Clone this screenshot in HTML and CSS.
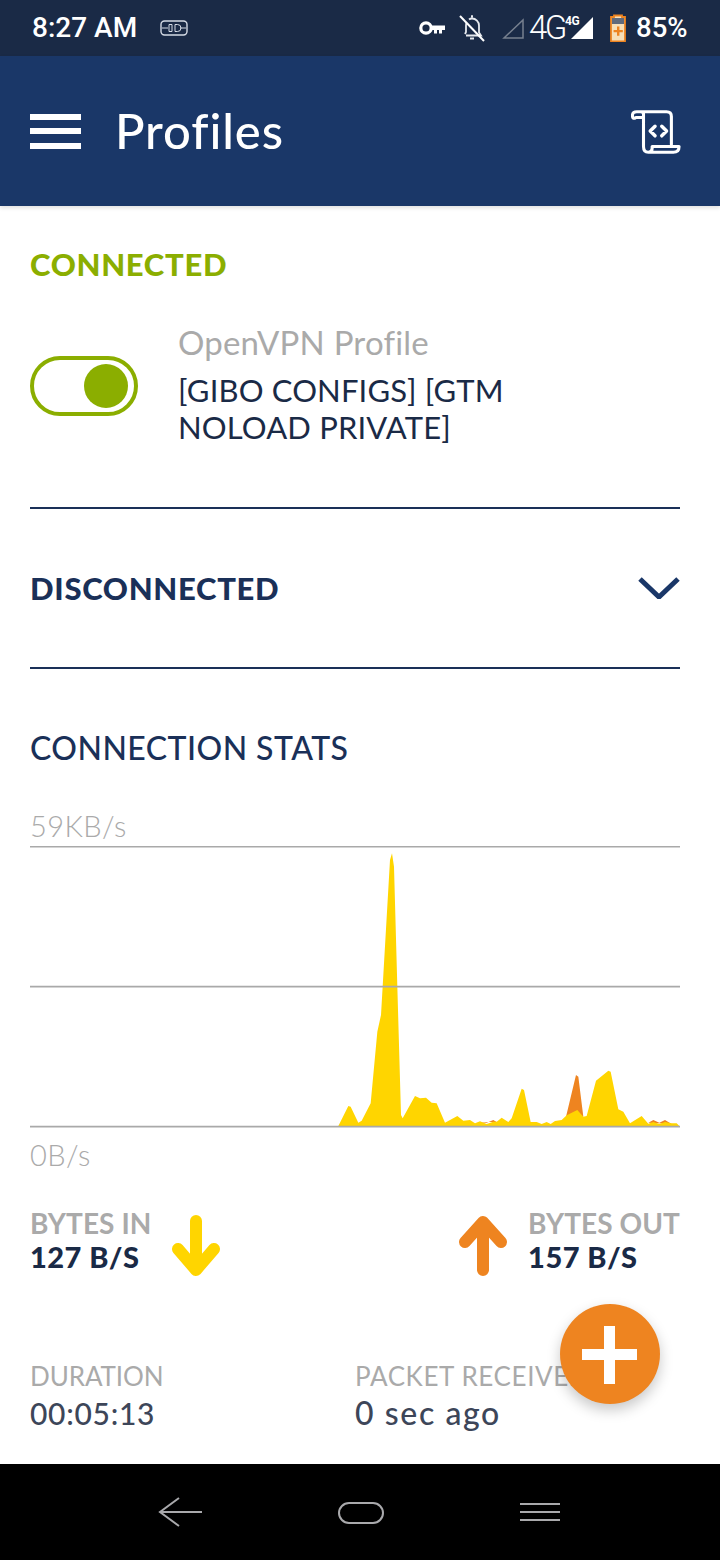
FILE: index.html
```html
<!DOCTYPE html>
<html lang="en">
<head>
<meta charset="utf-8">
<title>Profiles</title>
<link rel="stylesheet" href="styles.css">
</head>
<body>
<div class="phone">
  <div class="statusbar">
    <div class="status-left">
      <span class="time">8:27 AM</span>
      <svg class="ic-vpn" viewBox="0 0 28 16" fill="none" stroke="#d5dbe5" stroke-width="1.4"><rect x="1" y="1" width="26" height="14" rx="3.5"/><path d="M2 8h6M20 8h6M9 4.5h3v7H9zM15 4.5h2.5a3.5 3.5 0 0 1 0 7H15z" stroke-width="1"/></svg>
    </div>
    <div class="status-right">
      <svg class="ic-key" viewBox="0 0 26 14" fill="none" stroke="#fff"><circle cx="7" cy="7" r="5.200" stroke-width="3.200"/><path d="M12 4.500h14v4.500h-3v3.500h-3V9h-2v3.500h-3V9h-3z" fill="#fff" stroke="none"/></svg>
      <svg class="ic-bell" viewBox="0 0 26 27" fill="none" stroke="#e6e9ee" stroke-width="1.800"><path d="M13 3.500a7 7 0 0 1 7 7v7l2 3H7M6 19l1-2v-6.500q0-1.500.6-3M10 4.500q1.200-1 3-1M11 23.500h4"/><path d="M12 1.500h2" stroke-width="2.500"/><path d="M1 1l24 25" stroke-width="2" stroke="#fff"/></svg>
      <svg class="ic-signal" viewBox="0 0 22 21" fill="none" stroke="#77808f" stroke-width="1.500"><path d="M21 2v18H2z"/></svg>
      <span class="net">4G</span>
      <span class="net-wrap">
        <svg class="ic-bars" viewBox="0 0 22 22"><path d="M22 0v22H0z" fill="#fff"/></svg>
        <span class="net-small">4G</span>
      </span>
      <svg class="ic-batt" viewBox="0 0 16 28"><path d="M4 1.500h8V3h3v24.500H1V3h3z" fill="#f6dfb8" stroke="#ee8420" stroke-width="1.800"/><path d="M2 4h12v6H2z" fill="#5f6a7c"/><path d="M7 12.500h2.400v3.400h3.400v2.400H9.400v3.400H7v-3.400H3.600v-2.400H7z" fill="#ee8420"/></svg>
      <span class="batt-text">85%</span>
    </div>
  </div>

  <header class="appbar">
    <div class="burger"><i></i><i></i><i></i></div>
    <h1 class="title">Profiles</h1>
    <svg class="ic-script" viewBox="0 0 52 46" fill="none" stroke="#fff" stroke-width="3.200" stroke-linejoin="round" stroke-linecap="round"><path d="M5 8h8M13 14V4Q13 2 10 2H6Q1.500 2 1.500 6T5 8M10 2h27q5 0 5 5v29"/><path d="M13 14v24q0 6 5 6h26q6 0 6-6H22v2q0 4-4 4"/><path d="M25 17l-5 5 5 5M32 17l5 5-5 5" stroke-width="3.600"/></svg>
  </header>

  <main class="content">
    <section class="block-connected">
      <h2 class="h-connected">CONNECTED</h2>
      <div class="profile">
        <div class="toggle"><span class="knob"></span></div>
        <div class="profile-text">
          <div class="profile-label">OpenVPN Profile</div>
          <div class="profile-name">[GIBO CONFIGS] [GTM NOLOAD PRIVATE]</div>
        </div>
      </div>
    </section>

    <section class="block-disconnected">
      <h2 class="h-disconnected">DISCONNECTED</h2>
      <svg class="chevron" viewBox="0 0 42 22" fill="none" stroke="#1a3768" stroke-width="5"><path d="M2 2l19 18L40 2"/></svg>
    </section>

    <section class="stats">
      <h2 class="h-stats">CONNECTION STATS</h2>
      <div class="axis axis-top">59KB/s</div>
      <svg class="chart" viewBox="-870 18 1950 846">
        <path class="area-out" d="M738 830L768 705L775 710L790 830ZM475 846L500 848L520 840L530 846ZM985 848L1000 840L1018 848L1035 840L1055 852Z"/>
        <path class="area-in" d="M55 858L85 798L92 800L115 848L125 842L152 790L172 575L183 525L210 60L216 40L222 80L232 440L243 825L248 835L285 768L300 775L318 773L335 788L350 790L375 848L412 828L430 842L450 840L465 850L480 844L500 852L520 845L530 845L545 833L565 846L575 835L605 746L612 750L632 846L650 846L665 852L680 846L692 852L705 843L725 840L740 826L772 810L790 830L800 828L828 722L865 692L872 695L895 808L910 815L930 850L965 828L985 851L1000 846L1018 852L1035 846L1055 850L1070 850L1080 860L55 860Z"/>
        <path class="gridline" d="M-870 20H1080M-870 440H1080M-870 860H1080"/>
      </svg>
      <div class="axis axis-bottom">0B/s</div>

      <div class="rates">
        <div class="rate">
          <div>
            <div class="rate-label">BYTES IN</div>
            <div class="rate-value">127 B/S</div>
          </div>
          <svg class="arrow" viewBox="0 0 48 61" fill="none" stroke="#ffd500" stroke-width="12" stroke-linecap="round" stroke-linejoin="round"><path d="M24 6v49M6 34l18 21 18-21"/></svg>
        </div>
        <div class="rate">
          <svg class="arrow" viewBox="0 0 48 61" fill="none" stroke="#ee8420" stroke-width="12" stroke-linecap="round" stroke-linejoin="round"><path d="M24 55V7M6 27L24 7l18 20"/></svg>
          <div>
            <div class="rate-label">BYTES OUT</div>
            <div class="rate-value">157 B/S</div>
          </div>
        </div>
      </div>

      <div class="meta">
        <div>
          <div class="meta-label">DURATION</div>
          <div class="meta-value">00:05:13</div>
        </div>
        <div>
          <div class="meta-label meta-label-wide">PACKET RECEIVED</div>
          <div class="meta-value meta-value-wide">0 sec ago</div>
        </div>
      </div>
    </section>
    <button class="fab" aria-label="Add"><i class="plus-h"></i><i class="plus-v"></i></button>
  </main>

  <nav class="navbar">
    <svg class="nav-back" viewBox="0 0 44 32" fill="none" stroke="#a9a9ac" stroke-width="2"><path d="M21 1L2 15l19 14M2 15h42"/></svg>
    <svg class="nav-home" viewBox="0 0 46 22" fill="none" stroke="#a9a9ac" stroke-width="2"><rect x="1" y="1" width="44" height="20" rx="10"/></svg>
    <svg class="nav-menu" viewBox="0 0 40 18" fill="none" stroke="#a9a9ac" stroke-width="2"><path d="M0 1h40M0 9h40M0 17h40"/></svg>
  </nav>
</div>
</body>
</html>
```

FILE: styles.css
```css
* { box-sizing: border-box; }
html, body { margin: 0; padding: 0; }
body { background: #fff; font-family: "Lato", "Liberation Sans", sans-serif; }
h1, h2 { margin: 0; }

.phone { width: 720px; height: 1560px; display: flex; flex-direction: column; overflow: hidden; }

/* status bar */
.statusbar { height: 56px; flex: none; background: #1a2a46; display: flex; justify-content: space-between; align-items: center; padding: 0 33px 0 32px; color: #fff; font-family: "Roboto", sans-serif; }
.status-left, .status-right { display: flex; align-items: center; }
.time { font-size: 28px; font-weight: 500; line-height: 56px; width: 128px; }
.ic-vpn { width: 28px; height: 16px; }
.ic-key { width: 26px; height: 14px; margin-right: 14px; }
.ic-bell { width: 26px; height: 27px; margin-right: 17px; }
.ic-signal { width: 22px; height: 21px; margin-right: 5px; }
.net { font-size: 33px; font-weight: 300; letter-spacing: -2.500px; width: 36px; line-height: 56px; }
.net-wrap { position: relative; width: 28px; height: 22px; margin-right: 17px; display: block; }
.ic-bars { position: absolute; right: 0; bottom: 0; width: 22px; height: 22px; }
.net-small { position: absolute; left: 0; top: -2px; font-size: 12px; font-weight: 700; line-height: 12px; letter-spacing: -.5px; }
.ic-batt { width: 16px; height: 28px; margin-right: 10px; }
.batt-text { font-size: 27.500px; font-weight: 500; line-height: 56px; width: 51px; white-space: nowrap; }

/* app bar */
.appbar { height: 150px; flex: none; background: #1a3768; display: flex; align-items: center; padding: 0 40px 0 30px; color: #fff; position: relative; z-index: 2; box-shadow: 0 2px 4px rgba(0,0,0,.12); }
.burger { width: 51px; height: 35px; display: flex; flex-direction: column; justify-content: space-between; margin-right: 34px; }
.burger i { display: block; height: 6px; background: #fff; }
.title { font-size: 49px; font-weight: 500; line-height: 60px; flex: 1; letter-spacing: .9px; margin-bottom: 3px; }
.ic-script { width: 50px; height: 46px; margin-right: -1px; margin-top: 1px; }

/* content */
.content { flex: 1; position: relative; padding: 0 40px 0 30px; background: #fff; }
.block-connected { height: 303px; border-bottom: 2px solid #1a3058; padding-top: 40px; }
.h-connected { font-size: 31px; font-weight: 900; line-height: 36px; color: #8bae00; letter-spacing: .7px; }
.profile { display: flex; align-items: center; gap: 40px; margin-top: 42px; }
.toggle { width: 108px; height: 60px; flex: none; border: 4px solid #8bae00; border-radius: 30px; display: flex; justify-content: flex-end; align-items: center; padding-right: 6px; margin-top: 2px; }
.knob { width: 44px; height: 44px; border-radius: 50%; background: #8bae00; }
.profile-text { flex: 1; }
.profile-label { font-size: 33px; line-height: 37px; color: #aaa; font-weight: 400; margin-bottom: 11px; letter-spacing: .2px; }
.profile-name { font-size: 31px; line-height: 37px; color: #1a2a46; width: 340px; font-weight: 400; letter-spacing: .15px; }

.block-disconnected { height: 160px; border-bottom: 2px solid #1a3058; display: flex; justify-content: space-between; align-items: center; }
.h-disconnected { font-size: 31px; font-weight: 900; line-height: 34px; color: #1a3058; letter-spacing: .7px; }
.chevron { width: 42px; height: 22px; }

.stats { padding-top: 59px; }
.h-stats { font-size: 32px; font-weight: 500; line-height: 40px; color: #1a3058; letter-spacing: .45px; }
.axis { font-size: 29px; line-height: 30px; color: #aaa; font-weight: 300; letter-spacing: .4px; }
.axis-top { margin-top: 43px; }
.chart { display: block; width: 650px; height: 282px; margin-top: 5px; }
.axis-bottom { margin-top: 12px; }
.gridline { stroke: #a9a9a9; stroke-width: 5; fill: none; }
.area-in { fill: #ffd500; }
.area-out { fill: #ee8420; }

.rates { display: flex; justify-content: space-between; margin-top: 37px; }
.rate { display: flex; gap: 21px; }
.rate-label { font-size: 28px; font-weight: 700; line-height: 32px; color: #aaa; letter-spacing: .08px; }
.rate-value { font-size: 29px; font-weight: 900; line-height: 35px; color: #1a2a46; letter-spacing: .45px; }
.arrow { width: 48px; height: 61px; margin-top: 8px; }

.meta { display: grid; grid-template-columns: 325px 1fr; margin-top: 83px; white-space: nowrap; }
.meta-label { font-size: 26px; line-height: 34px; color: #aaa; letter-spacing: -.1px; }
.meta-label-wide { letter-spacing: .6px; }
.meta-value { font-size: 30px; line-height: 38px; margin-top: 1px; color: #3d4659; font-weight: 500; letter-spacing: .7px; }
.meta-value-wide { font-size: 32px; letter-spacing: 1.600px; }

.fab { position: absolute; left: 560px; top: 1098px; width: 100px; height: 100px; border: 0; padding: 0; border-radius: 50%; background: #ee8420; box-shadow: 0 6px 14px rgba(0,0,0,.22); }
.plus-h { position: absolute; left: 22px; top: 45px; width: 55px; height: 11px; background: #fff; }
.plus-v { position: absolute; left: 44px; top: 22px; width: 11px; height: 58px; background: #fff; }

/* nav bar */
.navbar { height: 96px; flex: none; background: #000; display: flex; align-items: center; padding: 0 160px 0 158px; justify-content: space-between; }
.nav-back { width: 44px; height: 32px; margin-top: 2px; }
.nav-home { width: 46px; height: 22px; margin-top: 1px; }
.nav-menu { width: 40px; height: 18px; margin-top: -1px; }
```
